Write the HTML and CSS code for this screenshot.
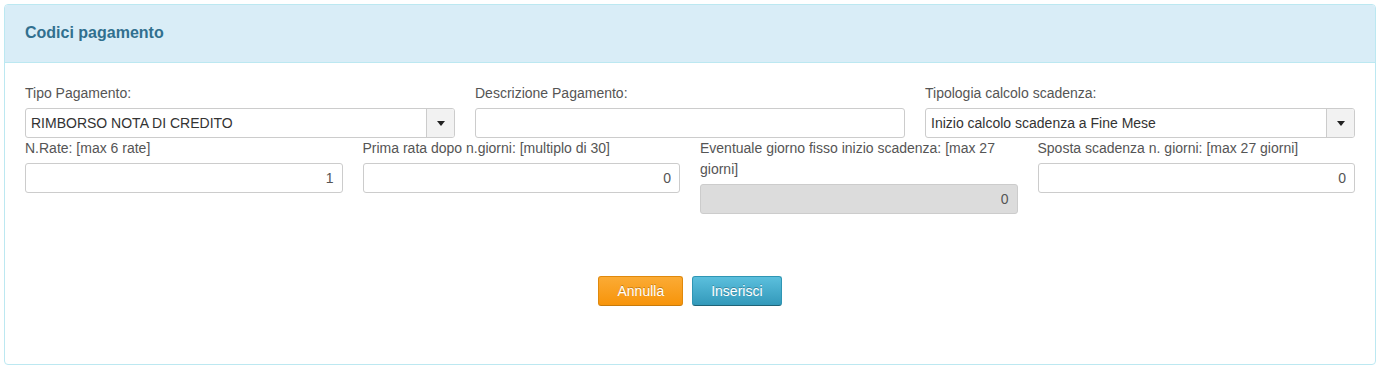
FILE: index.html
```html
<!DOCTYPE html>
<html>
<head>
<meta charset="utf-8">
<link rel="stylesheet" href="styles.css">
</head>
<body>

<div class="panel">
  <div class="panel-heading">Codici pagamento</div>

  <div class="panel-body">
    <div class="row">
      <div class="field">
        <label>Tipo Pagamento:</label>
        <div class="select">
          <span class="select-value">RIMBORSO NOTA DI CREDITO</span>
          <span class="select-btn"><span class="caret"></span></span>
        </div>
      </div>
      <div class="field">
        <label>Descrizione Pagamento:</label>
        <input type="text" class="form-control">
      </div>
      <div class="field">
        <label>Tipologia calcolo scadenza:</label>
        <div class="select">
          <span class="select-value">Inizio calcolo scadenza a Fine Mese</span>
          <span class="select-btn"><span class="caret"></span></span>
        </div>
      </div>
    </div>

    <div class="row">
      <div class="field">
        <label>N.Rate: [max 6 rate]</label>
        <input type="text" class="form-control num" value="1">
      </div>
      <div class="field">
        <label>Prima rata dopo n.giorni: [multiplo di 30]</label>
        <input type="text" class="form-control num" value="0">
      </div>
      <div class="field">
        <label>Eventuale giorno fisso inizio scadenza: [max 27 giorni]</label>
        <input type="text" class="form-control num" value="0" disabled>
      </div>
      <div class="field">
        <label>Sposta scadenza n. giorni: [max 27 giorni]</label>
        <input type="text" class="form-control num" value="0">
      </div>
    </div>

    <div class="actions">
      <button class="btn btn-warning">Annulla</button>
      <button class="btn btn-info">Inserisci</button>
    </div>
  </div>
</div>

</body>
</html>
```

FILE: styles.css
```css
body {
  margin: 4px 6px 4px 4px;
  background-color: #fff;
  font-family: "Liberation Sans", Arial, sans-serif;
  font-size: 14px;
  color: #555;
}

.panel {
  border: 1px solid #bce8f1;
  border-radius: 4px;
  background-color: #fff;
}

.panel-heading {
  height: 57px;
  line-height: 55px;
  padding: 0 20px;
  background-color: #d9edf7;
  border-bottom: 1px solid #bce8f1;
  border-radius: 3px 3px 0 0;
  color: #31708f;
  font-size: 16px;
  font-weight: bold;
}

.panel-body {
  padding: 20px 20px 58px 20px;
}

.row {
  display: flex;
  gap: 20px;
}

.field {
  flex: 1;
  min-width: 0;
  display: flex;
  flex-direction: column;
}

label {
  display: block;
  line-height: 21px;
  margin-bottom: 4px;
  color: #555;
}

.form-control {
  box-sizing: border-box;
  width: 100%;
  height: 30px;
  padding: 0 8px 0 5px;
  border: 1px solid #ccc;
  border-radius: 3px;
  background-color: #fff;
  font-family: inherit;
  font-size: 14px;
  color: #555;
}

.form-control.num {
  text-align: right;
}

.form-control:disabled {
  background-color: #dcdcdc;
  color: #555;
}

.select {
  box-sizing: border-box;
  display: flex;
  height: 30px;
  border: 1px solid #ccc;
  border-radius: 3px;
  background-color: #fff;
  overflow: hidden;
}

.select-value {
  flex: 1;
  padding-left: 5px;
  line-height: 28px;
  color: #333;
  white-space: nowrap;
  overflow: hidden;
}

.select-btn {
  width: 27px;
  display: flex;
  align-items: center;
  justify-content: center;
  border-left: 1px solid #ccc;
  background-color: #f2f2f2;
}

.caret {
  width: 0;
  height: 0;
  border-left: 4px solid transparent;
  border-right: 4px solid transparent;
  border-top: 5px solid #222;
}

.actions {
  display: flex;
  justify-content: center;
  gap: 9px;
  margin-top: 62px;
}

.btn {
  height: 30px;
  padding: 0 18px;
  border: 1px solid;
  border-radius: 3px;
  font-family: inherit;
  font-size: 14px;
  color: #fff;
  text-shadow: 0 -1px 0 rgba(0, 0, 0, 0.25);
  cursor: pointer;
}

.btn-warning {
  background: linear-gradient(#fbab35, #f7940a);
  border-color: #e0890c #e0890c #c77a0a;
}

.btn-info {
  background: linear-gradient(#5bbfdd, #3399ba);
  border-color: #2f96b4 #2f96b4 #1f6377;
}
```
